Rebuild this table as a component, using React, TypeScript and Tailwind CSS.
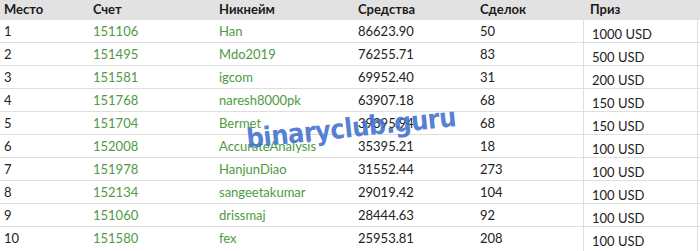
import React from 'react';

type Row = {
    place: number;
    account: string;
    nick: string;
    funds: string;
    deals: number;
    prize: string;
};

const rows: Row[] = [
    { place: 1, account: '151106', nick: 'Han', funds: '86623.90', deals: 50, prize: '1000 USD' },
    { place: 2, account: '151495', nick: 'Mdo2019', funds: '76255.71', deals: 83, prize: '500 USD' },
    { place: 3, account: '151581', nick: 'igcom', funds: '69952.40', deals: 31, prize: '200 USD' },
    { place: 4, account: '151768', nick: 'naresh8000pk', funds: '63907.18', deals: 68, prize: '150 USD' },
    { place: 5, account: '151704', nick: 'Bermet', funds: '39395.94', deals: 68, prize: '150 USD' },
    { place: 6, account: '152008', nick: 'AccurateAnalysis', funds: '35395.21', deals: 18, prize: '100 USD' },
    { place: 7, account: '151978', nick: 'HanjunDiao', funds: '31552.44', deals: 273, prize: '100 USD' },
    { place: 8, account: '152134', nick: 'sangeetakumar', funds: '29019.42', deals: 104, prize: '100 USD' },
    { place: 9, account: '151060', nick: 'drissmaj', funds: '28444.63', deals: 92, prize: '100 USD' },
    { place: 10, account: '151580', nick: 'fex', funds: '25953.81', deals: 208, prize: '100 USD' },
];

const cols = 'grid grid-cols-[89px_126px_139px_122px_107px_117px]';

export default function App() {
    return (
        <div className="relative w-[700px] h-[251px] overflow-hidden bg-white text-[13px] text-[#222] font-['Lato',sans-serif]">
            {/* header */}
            <div className={`${cols} h-[19px] items-center bg-[#e2e2e2] font-bold text-[#1a1a1a]`}>
                <div className="pl-[4px]">Место</div>
                <div className="pl-[4px]">Счет</div>
                <div className="pl-[4px]">Никнейм</div>
                <div className="pl-[4px]">Средства</div>
                <div className="pl-[4px]">Сделок</div>
                <div className="pl-[7px]">Приз</div>
            </div>

            {rows.map((r) => (
                <div key={r.place} className={`${cols} h-[23px] border-t border-[#dedede]`}>
                    <div className="pl-[4px] pt-[2px]">{r.place}</div>
                    <div className="pl-[4px] pt-[2px] text-[#4f9a42]">{r.account}</div>
                    <div className="pl-[4px] pt-[2px] text-[#4f9a42]">{r.nick}</div>
                    <div className="pl-[4px] pt-[2px]">{r.funds}</div>
                    <div className="pl-[4px] pt-[2px]">{r.deals}</div>
                    <div className="pl-[8px] pt-[5px] border-l border-r border-[#dedede] mr-[2px]">{r.prize}</div>
                </div>
            ))}

            {/* watermark */}
            <div className="absolute left-[246px] top-[114px] -rotate-6 font-['DejaVu_Sans_Condensed','DejaVu_Sans',sans-serif] font-bold text-[27px] leading-none text-[#3f6fcd]/90 tracking-[-0.5px] pointer-events-none">
                binaryclub.guru
            </div>
        </div>
    );
}
